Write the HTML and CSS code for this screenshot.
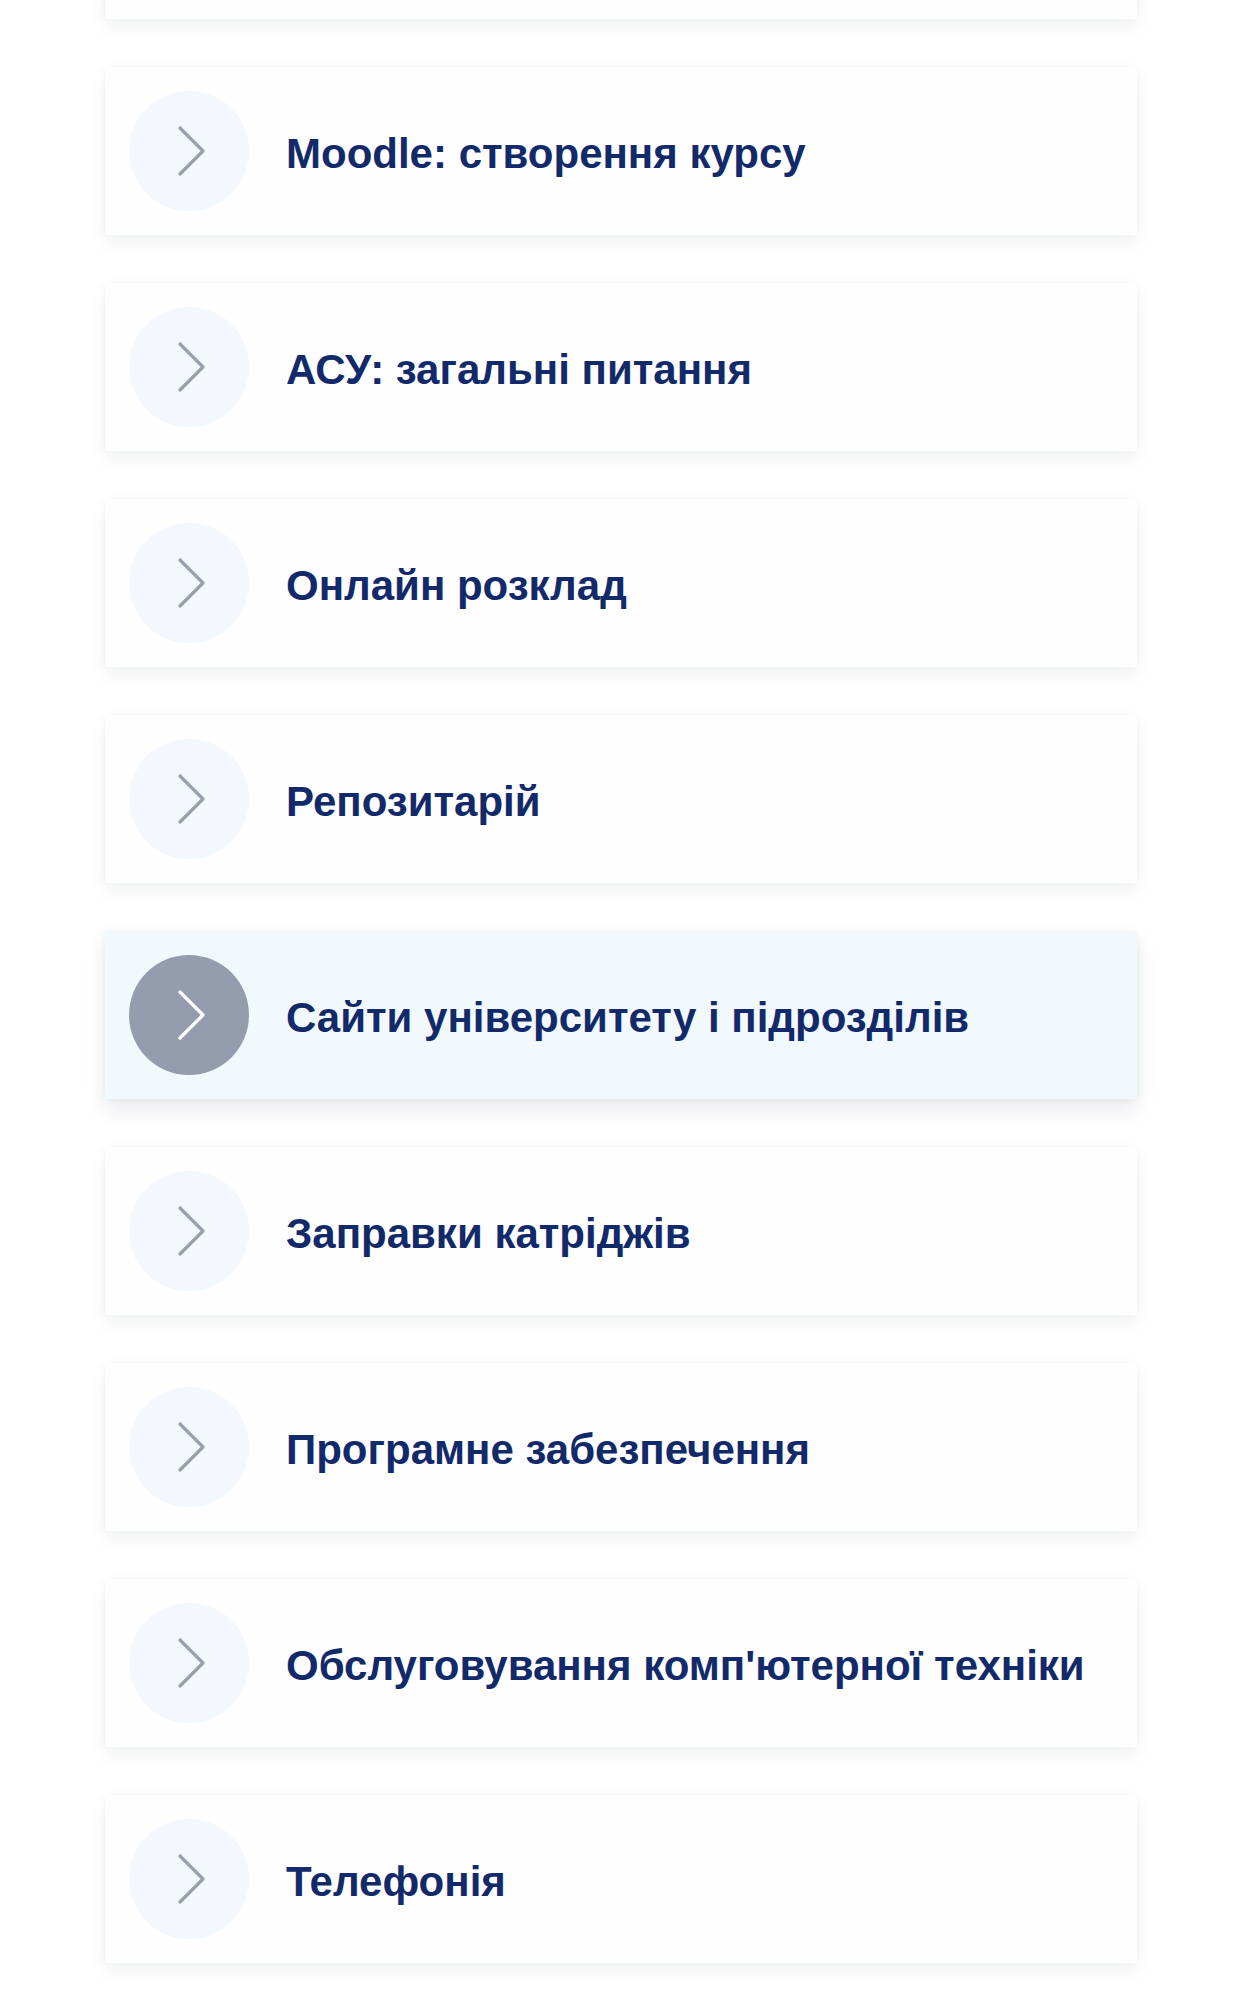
FILE: index.html
```html
<!DOCTYPE html>
<html lang="uk">
<head>
<meta charset="utf-8">
<title>Сервіси</title>
<link rel="stylesheet" href="styles.css">
</head>
<body>
<ul class="list">
  <li class="card"><span class="icon"><svg viewBox="0 0 120 120"><path d="M51 37 L74 60 L51 83"/></svg></span></li>
  <li class="card"><span class="icon"><svg viewBox="0 0 120 120"><path d="M51 37 L74 60 L51 83"/></svg></span><span class="label">Moodle: створення курсу</span></li>
  <li class="card"><span class="icon"><svg viewBox="0 0 120 120"><path d="M51 37 L74 60 L51 83"/></svg></span><span class="label">АСУ: загальні питання</span></li>
  <li class="card"><span class="icon"><svg viewBox="0 0 120 120"><path d="M51 37 L74 60 L51 83"/></svg></span><span class="label">Онлайн розклад</span></li>
  <li class="card"><span class="icon"><svg viewBox="0 0 120 120"><path d="M51 37 L74 60 L51 83"/></svg></span><span class="label">Репозитарій</span></li>
  <li class="card active"><span class="icon"><svg viewBox="0 0 120 120"><path d="M51 37 L74 60 L51 83"/></svg></span><span class="label">Сайти університету і підрозділів</span></li>
  <li class="card"><span class="icon"><svg viewBox="0 0 120 120"><path d="M51 37 L74 60 L51 83"/></svg></span><span class="label">Заправки катріджів</span></li>
  <li class="card"><span class="icon"><svg viewBox="0 0 120 120"><path d="M51 37 L74 60 L51 83"/></svg></span><span class="label">Програмне забезпечення</span></li>
  <li class="card"><span class="icon"><svg viewBox="0 0 120 120"><path d="M51 37 L74 60 L51 83"/></svg></span><span class="label">Обслуговування комп'ютерної техніки</span></li>
  <li class="card"><span class="icon"><svg viewBox="0 0 120 120"><path d="M51 37 L74 60 L51 83"/></svg></span><span class="label">Телефонія</span></li>
</ul>
</body>
</html>
```
FILE: styles.css
```css
html, body {
  margin: 0;
  padding: 0;
  background: #ffffff;
}
body {
  font-family: "Liberation Sans", Arial, sans-serif;
  overflow: hidden;
  height: 1994px;
}
.list {
  list-style: none;
  margin: -149px 105px 0;
  padding: 0;
  display: flex;
  flex-direction: column;
  gap: 48px;
}
.card {
  height: 168px;
  box-sizing: border-box;
  padding: 0 24px;
  display: flex;
  align-items: center;
  gap: 37px;
  background: #fefefe;
  box-shadow: 0 8px 18px rgba(20, 30, 60, 0.06), 0 0 6px rgba(20, 30, 60, 0.03);
}
.icon {
  flex: none;
  width: 120px;
  height: 120px;
  border-radius: 50%;
  background: #f3f7fe;
  display: flex;
}
.icon svg {
  width: 120px;
  height: 120px;
  fill: none;
  stroke: #9a9fad;
  stroke-width: 3.2;
  stroke-linecap: round;
  stroke-linejoin: round;
}
.label {
  font-weight: 700;
  font-size: 42px;
  line-height: 1;
  padding-top: 6px;
  color: #12296a;
  white-space: nowrap;
}
.card.active {
  background: #f2f9fd;
  box-shadow: 0 10px 20px rgba(20, 30, 60, 0.1), 0 0 6px rgba(20, 30, 60, 0.04);
}
.card.active .icon {
  background: #959cad;
}
.card.active .icon svg {
  stroke: #ffffff;
}
```
